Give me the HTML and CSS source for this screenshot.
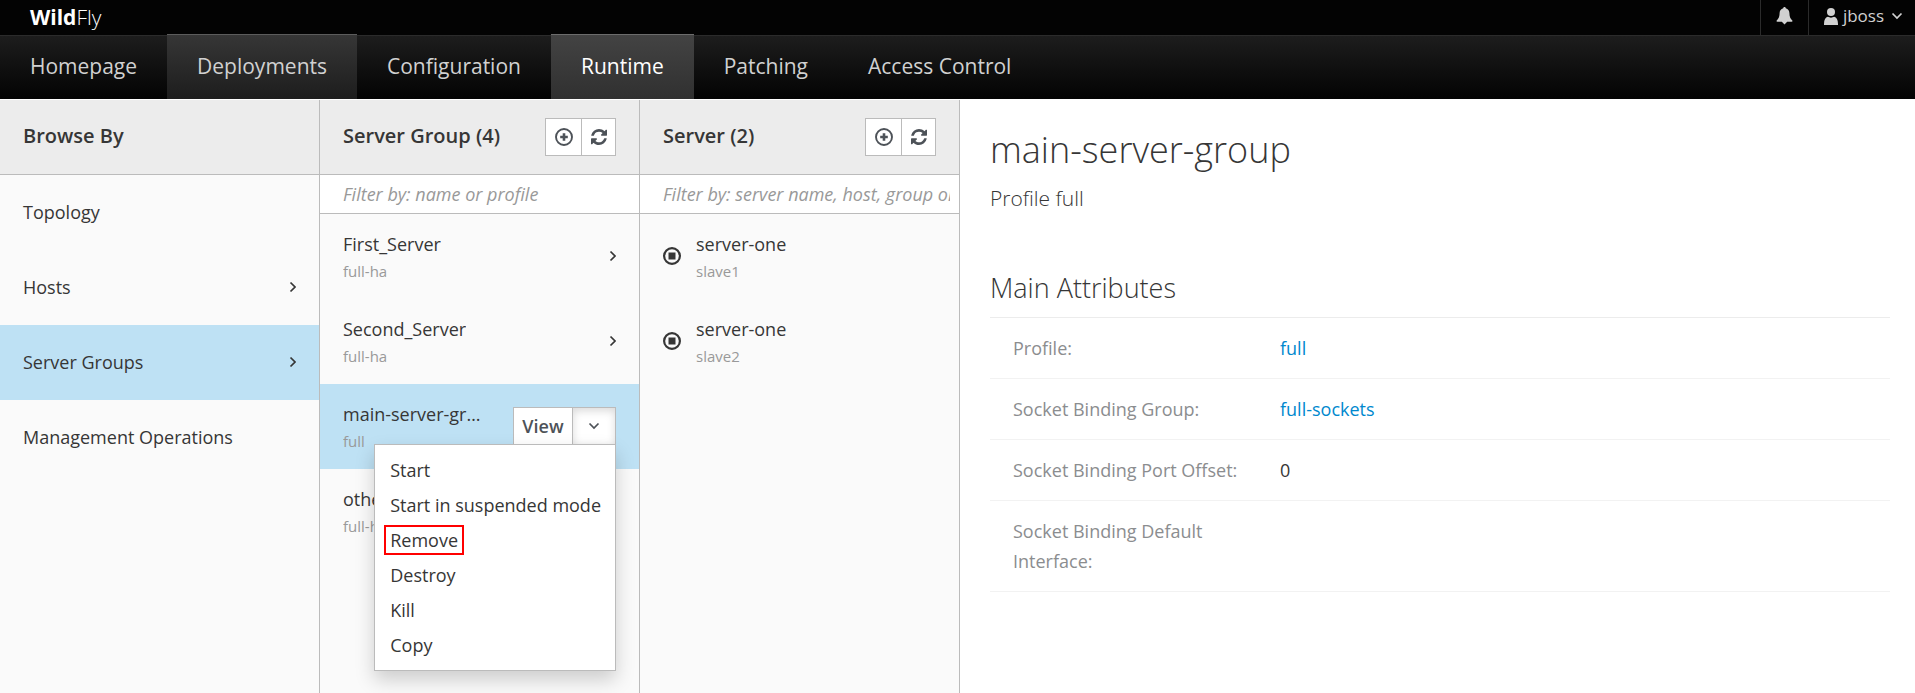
FILE: index.html
```html
<!DOCTYPE html>
<html lang="en">
<head>
  <meta charset="UTF-8">
  <title>WildFly Management Console</title>
  <meta name="viewport" content="width=device-width, initial-scale=1.0">
  <link rel="stylesheet" href="styles.css">
</head>
<body>
  <svg class="sprite" aria-hidden="true">
    <symbol id="icon-right" viewBox="0 0 8 12"><path d="M2.500 1.500 7 6 2.500 10.500" fill="none" stroke="currentColor" stroke-width="1.700"/></symbol>
    <symbol id="icon-down" viewBox="0 0 12 8"><path d="M1.500 1.500 6 6 10.500 1.500" fill="none" stroke="currentColor" stroke-width="1.700"/></symbol>
    <symbol id="icon-add" viewBox="0 0 18 18"><circle cx="9" cy="9" r="8" fill="none" stroke="currentColor" stroke-width="1.900"/><path d="M9 5.200v7.600M5.200 9h7.600" stroke="currentColor" stroke-width="2.600"/></symbol>
    <symbol id="icon-refresh" viewBox="0 0 1536 1536"><path fill="currentColor" d="M1511 928q0 5-1 7-64 268-268 434.500T764 1536q-146 0-282.500-55T238 1324l-129 129q-19 19-45 19t-45-19-19-45V960q0-26 19-45t45-19h448q26 0 45 19t19 45-19 45l-137 137q71 66 161 102t187 36q134 0 250-65t186-179q11-17 53-117 8-23 30-23h192q13 0 22.500 9.500t9.500 22.500zm25-800v448q0 26-19 45t-45 19h-448q-26 0-45-19t-19-45 19-45l138-138Q969 256 768 256q-134 0-250 65T332 500q-11 17-53 117-8 23-30 23H50q-13 0-22.500-9.500T18 608v-7q65-268 270-434.500T768 0q146 0 284 55.500T1297 212l130-129q19-19 45-19t45 19 19 45z"/></symbol>
    <symbol id="icon-stopped" viewBox="0 0 18 18"><circle cx="9" cy="9" r="7.900" fill="none" stroke="currentColor" stroke-width="2.200"/><rect x="5.500" y="5.500" width="7" height="7" fill="currentColor"/></symbol>
    <symbol id="icon-bell" viewBox="0 0 16 18"><path fill="currentColor" d="M8 0c.8 0 1.300.6 1.300 1.300 2.200.6 3.500 2.400 3.600 4.800.1 3.800.9 5.700 2.900 7.400.4.400.2 1.300-.5 1.300h-4.600L8 17.600l-2.700-2.800H.7c-.7 0-.9-.9-.5-1.300 2-1.700 2.800-3.600 2.900-7.400.1-2.400 1.400-4.200 3.600-4.800C6.700.6 7.200 0 8 0z"/></symbol>
    <symbol id="icon-user" viewBox="0 0 14 17"><circle cx="7" cy="4" r="4" fill="currentColor"/><path fill="currentColor" d="M0 17c-.1-5 1.200-7.500 3.800-8.200 2 1.100 4.400 1.100 6.400 0 2.600.7 3.900 3.200 3.800 8.200z"/></symbol>
  </svg>

  <header class="topbar">
    <a class="brand" href="#"><strong>Wild</strong>Fly</a>
    <div class="utility">
      <button class="utility-button" type="button" aria-label="Notifications"><svg class="bell"><use href="#icon-bell"/></svg></button>
      <button class="utility-button user-menu" type="button"><svg class="user"><use href="#icon-user"/></svg>jboss<svg class="chevron-down"><use href="#icon-down"/></svg></button>
    </div>
  </header>

  <nav class="main-nav">
    <a href="#">Homepage</a>
    <a class="hover" href="#">Deployments</a>
    <a href="#">Configuration</a>
    <a class="active" href="#">Runtime</a>
    <a href="#">Patching</a>
    <a href="#">Access Control</a>
  </nav>

  <main class="finder">
    <section class="column">
      <header class="column-header"><h2>Browse By</h2></header>
      <ul class="items">
        <li class="item">Topology</li>
        <li class="item">Hosts <svg class="chevron-right"><use href="#icon-right"/></svg></li>
        <li class="item selected">Server Groups <svg class="chevron-right"><use href="#icon-right"/></svg></li>
        <li class="item">Management Operations</li>
      </ul>
    </section>

    <section class="column">
      <header class="column-header">
        <h2>Server Group (4)</h2>
        <div class="button-group">
          <button class="add" type="button" aria-label="Add"><svg class="icon-add"><use href="#icon-add"/></svg></button>
          <button type="button" aria-label="Refresh"><svg class="icon-refresh"><use href="#icon-refresh"/></svg></button>
        </div>
      </header>
      <input class="filter" type="text" aria-label="Filter server groups" placeholder="Filter by: name or profile">
      <ul class="items">
        <li class="item two-line">
          <div class="item-text"><span>First_Server</span><small>full-ha</small></div>
          <svg class="chevron-right"><use href="#icon-right"/></svg>
        </li>
        <li class="item two-line">
          <div class="item-text"><span>Second_Server</span><small>full-ha</small></div>
          <svg class="chevron-right"><use href="#icon-right"/></svg>
        </li>
        <li class="item two-line selected">
          <div class="item-text"><span>main-server-group</span><small>full</small></div>
          <div class="button-group actions">
            <button class="view" type="button">View</button>
            <button class="toggle" type="button" aria-label="More actions" aria-expanded="true"><svg class="chevron-down"><use href="#icon-down"/></svg></button>
            <ul class="menu">
              <li><a href="#">Start</a></li>
              <li><a href="#">Start in suspended mode</a></li>
              <li><a href="#"><span class="marked">Remove</span></a></li>
              <li><a href="#">Destroy</a></li>
              <li><a href="#">Kill</a></li>
              <li><a href="#">Copy</a></li>
            </ul>
          </div>
        </li>
        <li class="item two-line">
          <div class="item-text"><span>other-server-group</span><small>full-ha</small></div>
          <svg class="chevron-right"><use href="#icon-right"/></svg>
        </li>
      </ul>
    </section>

    <section class="column">
      <header class="column-header">
        <h2>Server (2)</h2>
        <div class="button-group">
          <button class="add" type="button" aria-label="Add"><svg class="icon-add"><use href="#icon-add"/></svg></button>
          <button type="button" aria-label="Refresh"><svg class="icon-refresh"><use href="#icon-refresh"/></svg></button>
        </div>
      </header>
      <input class="filter" type="text" aria-label="Filter servers" placeholder="Filter by: server name, host, group or status">
      <ul class="items">
        <li class="item two-line">
          <svg class="icon-stopped"><use href="#icon-stopped"/></svg>
          <div class="item-text"><span>server-one</span><small>slave1</small></div>
        </li>
        <li class="item two-line">
          <svg class="icon-stopped"><use href="#icon-stopped"/></svg>
          <div class="item-text"><span>server-one</span><small>slave2</small></div>
        </li>
      </ul>
    </section>

    <article class="preview">
      <h1>main-server-group</h1>
      <p class="lead">Profile full</p>
      <h2>Main Attributes</h2>
      <dl class="attributes">
        <div><dt>Profile:</dt><dd><a href="#">full</a></dd></div>
        <div><dt>Socket Binding Group:</dt><dd><a href="#">full-sockets</a></dd></div>
        <div><dt>Socket Binding Port Offset:</dt><dd>0</dd></div>
        <div><dt>Socket Binding Default Interface:</dt><dd></dd></div>
      </dl>
    </article>
  </main>
</body>
</html>
```

FILE: styles.css
```css
* {
  box-sizing: border-box;
}
body {
  margin: 0;
  min-height: 100vh;
  display: flex;
  flex-direction: column;
  font-family: "Open Sans", sans-serif;
  font-size: 18px;
  line-height: 30px;
  color: #363636;
  background: #fff;
}
h1, h2, p, ul, dl, dd {
  margin: 0;
  padding: 0;
}
ul {
  list-style: none;
}
a {
  color: #0088ce;
  text-decoration: none;
}
button, input {
  font: inherit;
  color: inherit;
}
svg {
  display: block;
  flex: none;
}
.sprite {
  display: none;
}

/* top bar */
.topbar {
  display: flex;
  justify-content: space-between;
  height: 35px;
  background: #030303;
}
.brand {
  padding: 2px 30px;
  font-size: 21px;
  font-weight: 300;
  color: #fff;
}
.brand strong {
  font-weight: 700;
}
.utility {
  display: flex;
}
.utility-button {
  display: flex;
  align-items: center;
  padding: 0 15px 3px;
  border: 0;
  border-left: 1px solid #2b2b2b;
  background: none;
  font-size: 17px;
  color: #d1d1d1;
}
.user-menu {
  padding-right: 12px;
}
.user-menu .chevron-down {
  margin-left: 7px;
}
.bell {
  width: 17px;
  height: 18px;
}
.user {
  width: 14px;
  height: 17px;
  margin-right: 5px;
}
.chevron-down {
  width: 12px;
  height: 8px;
}
.chevron-right {
  width: 8px;
  height: 12px;
  margin-left: auto;
}

/* main navigation */
.main-nav {
  display: flex;
  height: 64px;
  margin-bottom: 1px;
  border-top: 1px solid #2b2b2b;
  background: linear-gradient(#1d1d1d, #030303);
}
.main-nav a {
  margin-top: -2px;
  padding: 16px 30px;
  border-top: 1px solid transparent;
  font-size: 21px;
  color: #d1d1d1;
}
.main-nav .hover {
  border-top-color: #5c5c5c;
  background: linear-gradient(#363636, #1d1d1d);
}
.main-nav .active {
  border-top-color: #6c6c6c;
  background: linear-gradient(#434343, #303030);
  color: #fff;
}

/* finder columns */
.finder {
  display: flex;
  flex: 1;
}
.column {
  flex: 0 0 320px;
  min-width: 0;
  border-right: 1px solid #bbb;
  background: #fafafa;
}
.column-header {
  display: flex;
  align-items: center;
  justify-content: space-between;
  height: 75px;
  padding: 0 23px;
  border-bottom: 1px solid #bbb;
  background: #ececec;
}
.column-header h2 {
  padding-bottom: 2px;
  font-size: 20px;
  font-weight: 600;
}
.button-group {
  display: flex;
}
.button-group button {
  display: flex;
  align-items: center;
  justify-content: center;
  width: 35px;
  height: 38px;
  padding: 0;
  border: 1px solid #bbb;
  background: #fff;
  color: #4d5258;
}
.button-group .add {
  width: 37px;
}
.button-group button + button {
  margin-left: -1px;
}
.icon-add, .icon-stopped {
  width: 18px;
  height: 18px;
}
.icon-refresh {
  width: 16px;
  height: 16px;
}
.filter {
  display: block;
  width: 100%;
  height: 39px;
  padding: 0 9px 0 23px;
  border: 0;
  border-bottom: 1px solid #bbb;
  background: #fff;
  outline: 0;
}
.filter::placeholder {
  color: #999;
  font-style: italic;
}
.item {
  display: flex;
  align-items: center;
  height: 75px;
  padding: 0 23px 2px;
}
.two-line {
  height: 85px;
}
.selected {
  background: #bee1f4;
}
.item-text {
  min-width: 0;
}
.item-text span, .item-text small {
  display: block;
  overflow: hidden;
  text-overflow: ellipsis;
  white-space: nowrap;
}
.item-text small {
  font-size: 15px;
  line-height: 24px;
  color: #999;
}
.icon-stopped {
  margin-right: 15px;
}

/* row actions */
.actions {
  position: relative;
  margin-left: 32px;
}
.button-group .view {
  width: 60px;
  font-weight: 600;
}
.button-group .toggle {
  width: 44px;
  box-shadow: inset 0 3px 8px rgba(0, 0, 0, .15);
}
.menu {
  position: absolute;
  top: 37px;
  right: 0;
  z-index: 1;
  padding: 8px 0 7px;
  border: 1px solid #bbb;
  background: #fff;
  box-shadow: 0 9px 18px rgba(0, 0, 0, .18);
}
.menu a {
  display: block;
  padding: 0 14px 0 15px;
  line-height: 35px;
  white-space: nowrap;
  color: #363636;
}
.marked {
  display: inline-block;
  margin: 0 -6px;
  padding: 0 4px;
  border: 2px solid #f00;
  line-height: 26px;
}

/* preview */
.preview {
  flex: 1;
  padding: 30px 25px 30px 30px;
}
.preview h1 {
  font-size: 36px;
  font-weight: 300;
  line-height: 40px;
}
.lead {
  margin: 13px 0 60px;
  font-size: 21px;
  font-weight: 300;
}
.preview h2 {
  padding-bottom: 14px;
  border-bottom: 1px solid #ececec;
  font-size: 27px;
  font-weight: 300;
}
.attributes div {
  display: flex;
  padding: 15px 23px;
  border-bottom: 1px solid #f2f2f2;
}
.attributes dt {
  flex: 0 0 267px;
  padding-right: 20px;
  color: #8b8d8f;
}
```
